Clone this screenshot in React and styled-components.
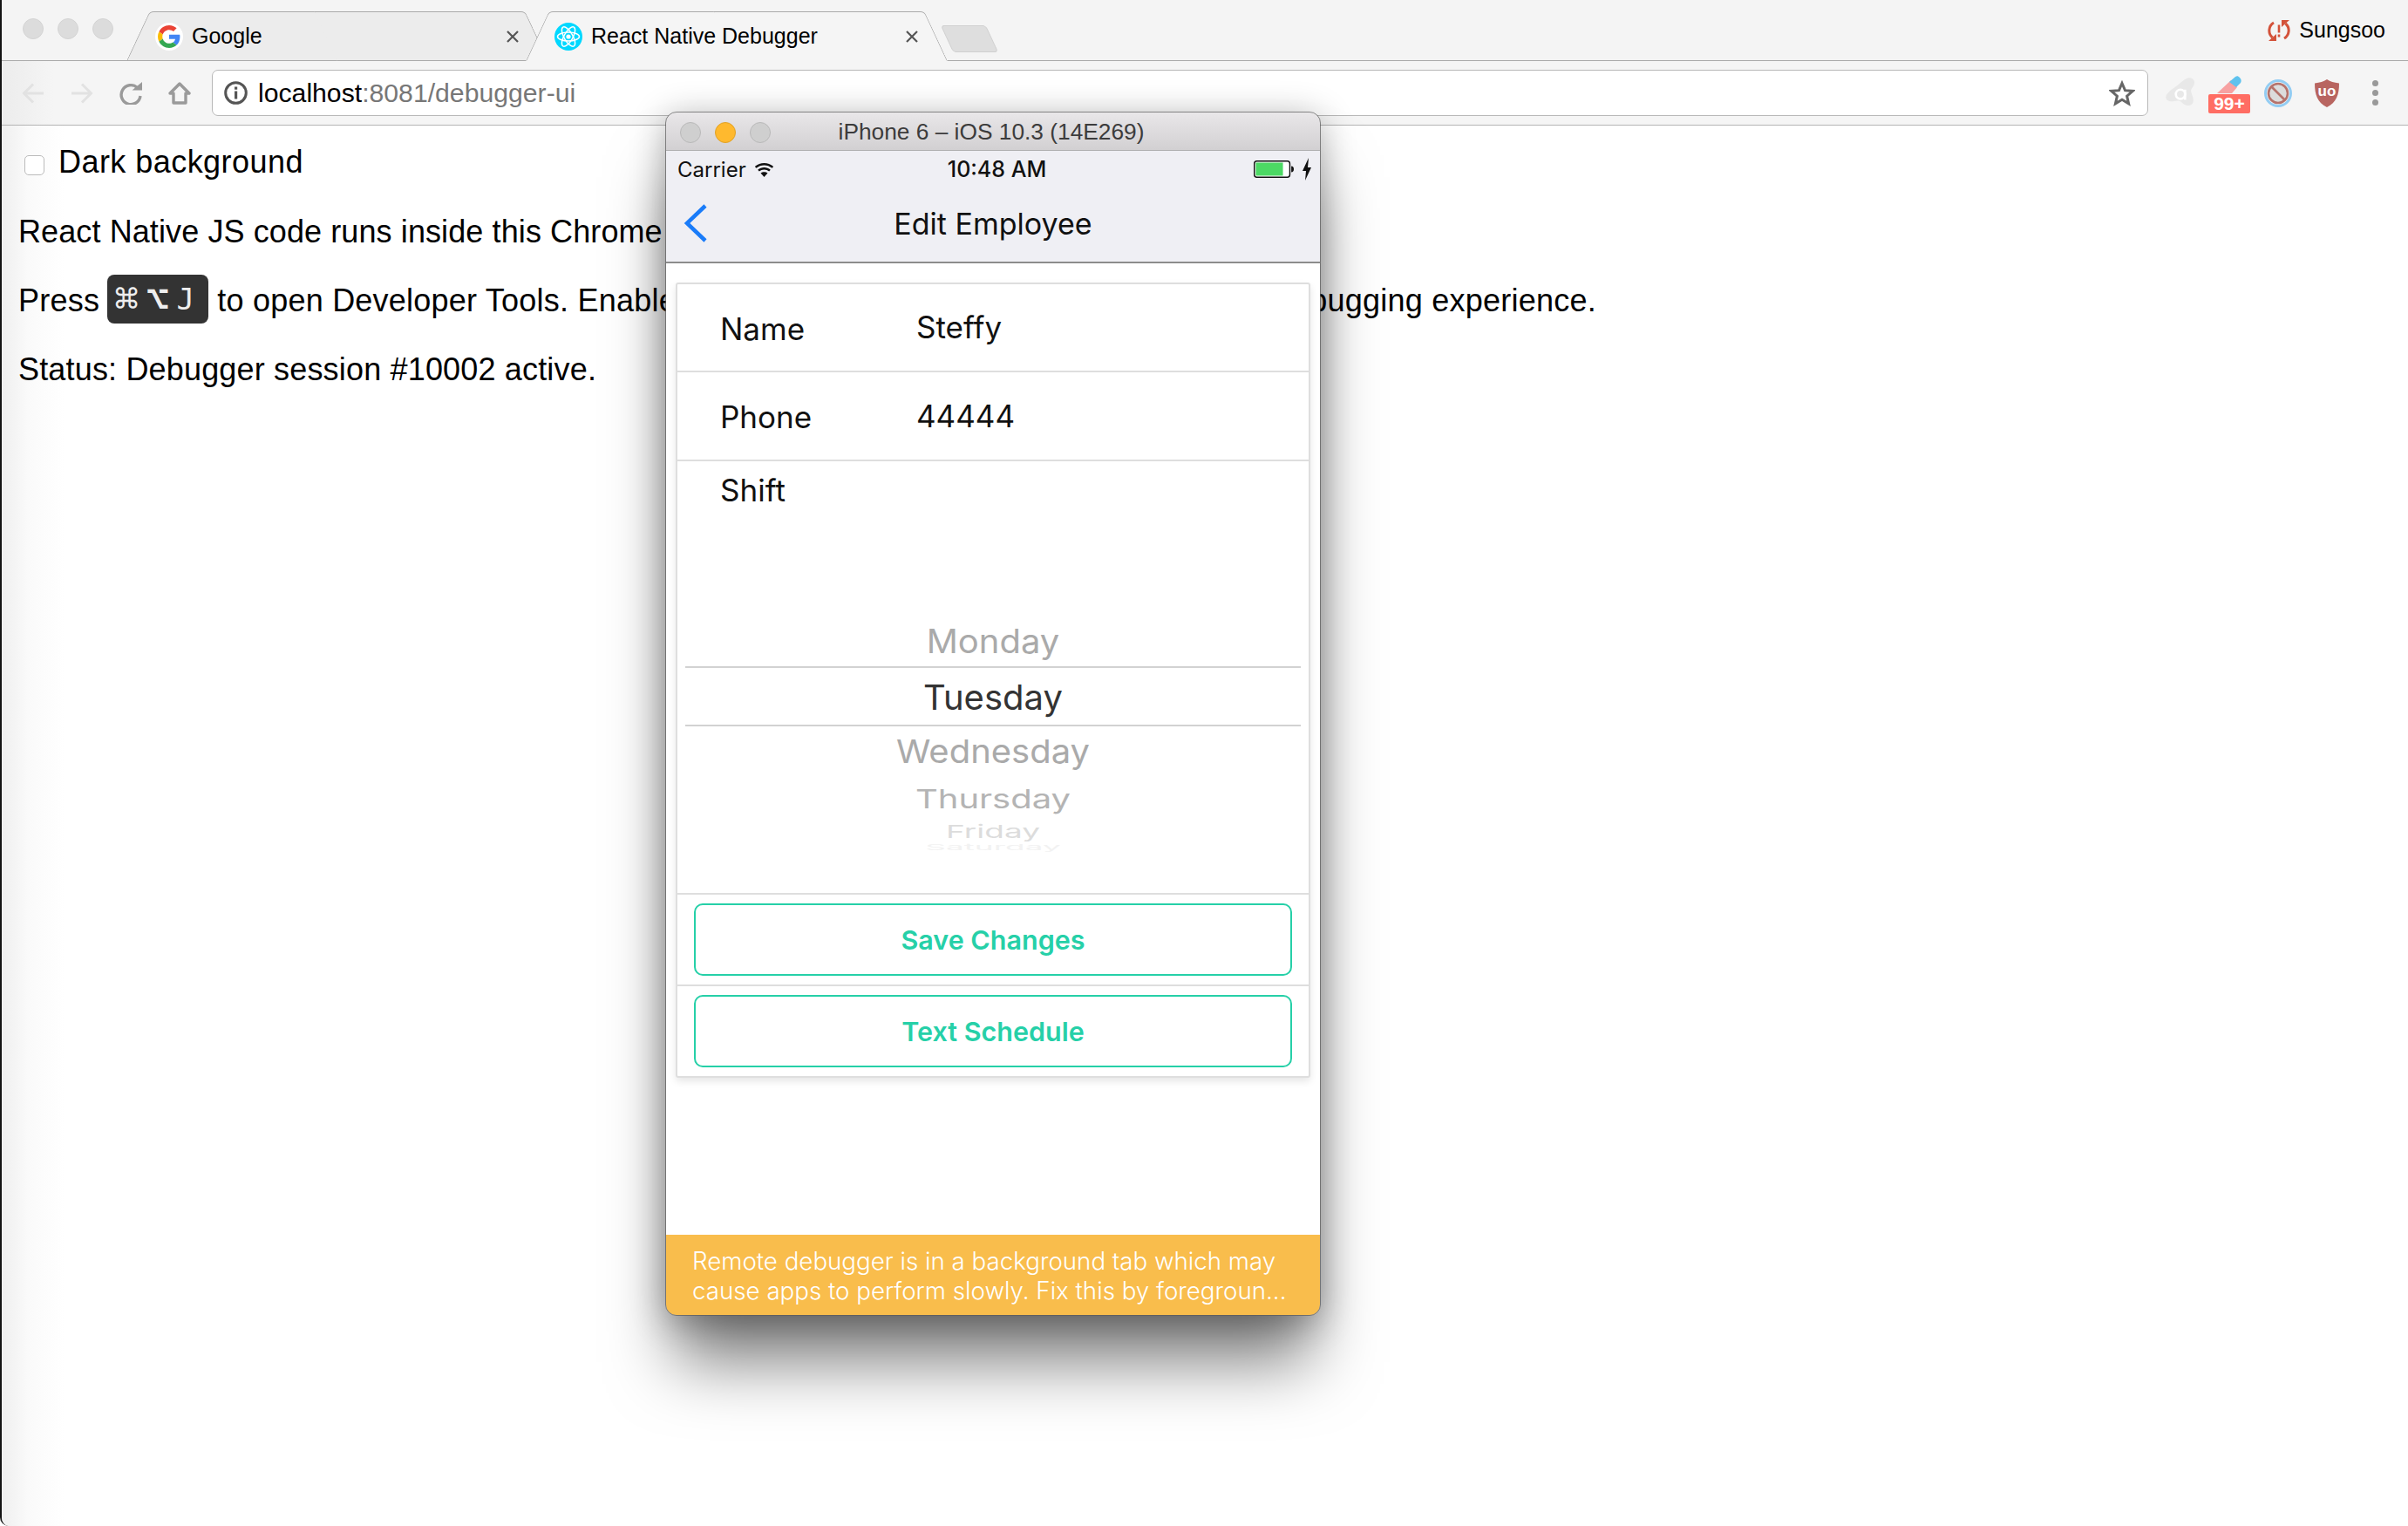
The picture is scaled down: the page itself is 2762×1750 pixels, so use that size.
import React from "react";
import styled, { createGlobalStyle } from "styled-components";

const Global = createGlobalStyle`
  html, body { margin: 0; padding: 0; background: #fff; }
  * { box-sizing: border-box; }
`;

const SANS = `"Liberation Sans", Arial, sans-serif`;
const IOS = `Inter, "Liberation Sans", sans-serif`;

const Screen = styled.div`
  position: relative;
  width: 2762px;
  height: 1750px;
  overflow: hidden;
  display: flex;
  flex-direction: column;
  font-family: ${SANS};
  border-left: 2px solid #141414;
  border-bottom-left-radius: 10px;
`;

/* ---- chrome tab strip ---- */
const TabStrip = styled.div`
  height: 70px;
  flex: none;
  display: flex;
  align-items: flex-end;
  background: #f4f4f4;
  border-bottom: 1px solid #aaa;
  padding-left: 24px;
  padding-right: 26px;
`;

const Lights = styled.div`
  display: flex;
  gap: 16px;
  align-self: flex-start;
  margin-top: 21px;
  margin-right: 15px;
`;

const Light = styled.span`
  width: 24px;
  height: 24px;
  border-radius: 50%;
  background: #dcdcdc;
  border: 1px solid #d4d4d4;
`;

const Tab = styled.div`
  position: relative;
  isolation: isolate;
  width: 483px;
  height: 57px;
  margin-bottom: -1px;
  margin-left: ${(p) => (p.$active ? "-25px" : "0")};
  z-index: ${(p) => (p.$active ? 2 : 1)};
  display: flex;
  align-items: center;
  padding: 0 32px 0 33px;
  font-size: 25px;
  color: #000;

  &::before,
  &::after {
    content: "";
    position: absolute;
    top: 0;
    bottom: 0;
    z-index: -1;
    background: ${(p) => (p.$active ? "#f5f5f5" : "#ececec")};
    border-top: 1px solid #aaa;
    border-bottom: 1px solid ${(p) => (p.$active ? "#f5f5f5" : "#aaa")};
  }
  &::before {
    left: 0;
    right: 50%;
    transform-origin: bottom left;
    transform: skewX(-25deg);
    border-left: 1px solid #aaa;
    border-top-left-radius: 5px;
  }
  &::after {
    left: 50%;
    right: 0;
    transform-origin: bottom right;
    transform: skewX(25deg);
    border-right: 1px solid #aaa;
    border-top-right-radius: 5px;
  }
`;

const Favicon = styled.span`
  width: 32px;
  height: 32px;
  flex: none;
  border-radius: 50%;
  background: ${(p) => (p.$cyan ? "#00d8ff" : "#fff")};
  display: flex;
  align-items: center;
  justify-content: center;
  margin-right: 10px;
`;

const TabTitle = styled.span`
  flex: 1;
  white-space: nowrap;
`;

const NewTab = styled.div`
  width: 52px;
  height: 31px;
  margin-bottom: 9px;
  margin-left: 0;
  background: #dedede;
  border: 1px solid #d0d0d0;
  border-radius: 4px;
  transform: skewX(25deg);
`;

const Profile = styled.div`
  margin-left: auto;
  align-self: center;
  display: flex;
  align-items: center;
  gap: 10px;
  font-size: 25px;
  color: #000;
`;

/* ---- chrome toolbar ---- */
const Toolbar = styled.div`
  height: 74px;
  flex: none;
  display: flex;
  align-items: center;
  background: linear-gradient(90deg, #ececec 0, #f5f5f5 60px);
  border-bottom: 1px solid #b4b4b4;
  padding-left: 23px;
`;

const NavButton = styled.span`
  width: 26px;
  height: 26px;
  margin-right: 30px;
  display: flex;
  flex: none;
`;

const Address = styled.div`
  width: 2221px;
  height: 53px;
  margin-left: -6px;
  flex: none;
  display: flex;
  align-items: center;
  background: #fff;
  border: 1px solid #b8b8b8;
  border-radius: 7px;
  padding: 0 14px 0 13px;
`;

const Url = styled.span`
  flex: 1;
  margin-left: 12px;
  font-size: 30.2px;
  color: #000;

  span {
    color: #777;
  }
`;

const Extensions = styled.div`
  display: flex;
  align-items: center;
  flex: none;
  height: 100%;
`;

const Ext = styled.span`
  position: relative;
  display: flex;
  justify-content: center;
  align-items: center;
  flex: none;
  width: ${(p) => p.$w}px;
`;

const Badge = styled.span`
  position: absolute;
  top: 3px;
  left: -5px;
  width: 48px;
  height: 22px;
  background: #ff6d63;
  border-radius: 2px;
  color: #fff;
  font-size: 21px;
  font-weight: 700;
  line-height: 22px;
  text-align: center;
`;

const MenuDots = styled.span`
  display: flex;
  flex-direction: column;
  gap: 4px;
  margin-left: 33px;

  i {
    width: 7px;
    height: 7px;
    border-radius: 50%;
    background: #999;
  }
`;

/* ---- debugger page ---- */
const Page = styled.main`
  flex: 1;
  padding: 3px 0 0 19px;
  background: linear-gradient(90deg, #efefef 0, #fafafa 30px, #fff 72px);
  font-size: 36px;
  color: #000;
`;

const Line = styled.p`
  margin: 0;
  height: 79px;
  line-height: 79px;
  white-space: nowrap;
  letter-spacing: ${(p) => p.$spacing}px;
`;

const DarkLabel = styled.label`
  display: flex;
  align-items: center;
  height: 79px;
  margin-left: 7px;
  padding-bottom: 2px;
  gap: 16px;
  letter-spacing: 0.45px;
`;

const Check = styled.input`
  appearance: none;
  width: 23px;
  height: 23px;
  margin: 8px 0 0;
  background: #fff;
  border: 1px solid #bbb;
  border-radius: 5px;
`;

const Kbd = styled.kbd`
  display: inline-flex;
  align-items: center;
  gap: 8px;
  vertical-align: middle;
  height: 56px;
  width: 116px;
  margin: -9px 10px 0 9px;
  padding-left: 8px;
  background: #333;
  border-radius: 8px;
  color: #eee;
  font-family: "DejaVu Sans Mono", monospace;
  letter-spacing: 0;
`;

const KeyGlyph = styled.span`
  font-size: ${(p) => p.$size}px;
  line-height: 1;
`;

/* ---- simulator window ---- */
const Simulator = styled.section`
  position: absolute;
  left: 762px;
  top: 129px;
  width: 750px;
  height: 1379px;
  display: flex;
  flex-direction: column;
  background: #fff;
  border-radius: 12px;
  outline: 1px solid rgba(90, 90, 90, 0.7);
  box-shadow: 0 64px 76px -10px rgba(0, 0, 0, 0.5), 0 6px 40px rgba(0, 0, 0, 0.32);
  font-family: ${IOS};
  overflow: hidden;
`;

const SimTitle = styled.header`
  height: 44px;
  flex: none;
  display: grid;
  grid-template-columns: 1fr auto 1fr;
  align-items: center;
  padding: 2px 20px 0 16px;
  background: linear-gradient(#e9e7e9, #d2d0d2);
  border-bottom: 1px solid #b0b0b0;
  color: #3c3c3c;
  font-family: ${SANS};
  font-size: 26.3px;
`;

const SimLights = styled.div`
  display: flex;
  gap: 16px;
`;

const SimLight = styled.span`
  width: 24px;
  height: 24px;
  border-radius: 50%;
  background: ${(p) => (p.$on ? "#ffb92e" : "#cfcfcf")};
  border: 1px solid ${(p) => (p.$on ? "#e0a126" : "#b9b9b9")};
`;

const StatusBar = styled.div`
  height: 44px;
  flex: none;
  display: grid;
  grid-template-columns: 1fr auto 1fr;
  align-items: center;
  padding: 0 10px 2px 13px;
  background: #efeff4;
  font-size: 24px;
  color: #111;
`;

const Carrier = styled.span`
  display: flex;
  align-items: center;
  gap: 8px;
`;

const Clock = styled.span`
  font-weight: 500;
  font-size: 25px;
  margin-left: 6px;
`;

const Power = styled.span`
  display: flex;
  justify-content: flex-end;
  align-items: center;
  gap: 10px;
`;

const NavBar = styled.div`
  height: 85px;
  flex: none;
  display: grid;
  grid-template-columns: 1fr auto 1fr;
  align-items: center;
  padding: 0 20px 5px 20px;
  background: #efeff4;
  border-bottom: 2px solid #8c8c8c;
  font-size: 34px;
  color: #111;
`;

const Content = styled.div`
  flex: 1;
  padding: 22px 11px 0;
`;

const Card = styled.div`
  border: 2px solid #dedede;
  border-radius: 3px;
  box-shadow: 0 4px 8px rgba(0, 0, 0, 0.1);
  background: #fff;
`;

const Field = styled.div`
  height: ${(p) => p.$h}px;
  display: flex;
  align-items: center;
  padding-left: 49px;
  border-bottom: 2px solid #dedede;
  font-size: 35px;
  color: #111;
`;

const FieldLabel = styled.span`
  width: 225px;
  flex: none;
  padding-top: 2px;
`;

const FieldValue = styled.span`
  padding-bottom: 1px;
`;

const ShiftBlock = styled.div`
  height: 497px;
  overflow: hidden;
  border-bottom: 2px solid #dedede;
`;

const ShiftLabel = styled.div`
  height: 66px;
  line-height: 66px;
  padding-left: 49px;
  font-size: 35px;
  color: #111;
`;

const Picker = styled.div`
  margin: 112px 9px 0;
`;

const PickerItem = styled.div`
  height: ${(p) => p.$h}px;
  line-height: ${(p) => (p.$selected ? p.$h - 2 : p.$h)}px;
  overflow: hidden;
  text-align: center;
  white-space: nowrap;
  color: ${(p) => p.$color};
  font-size: ${(p) => p.$size}px;
  ${(p) => p.$selected && "border-top: 2px solid #d2d2d2; border-bottom: 2px solid #d2d2d2;"}

  span {
    display: inline-block;
    transform: scaleY(${(p) => p.$squash});
  }
`;

const ButtonRow = styled.div`
  padding: 10px 19px;
  border-bottom: ${(p) => (p.$last ? "none" : "2px solid #dedede")};
`;

const ActionButton = styled.div`
  height: 83px;
  display: flex;
  align-items: center;
  justify-content: center;
  border: 2.5px solid #26d0a8;
  border-radius: 10px;
  color: #26d0a8;
  font-size: 30.5px;
  font-weight: 600;
`;

const Warning = styled.footer`
  height: 92px;
  flex: none;
  padding: 13px 0 0 30px;
  background: #f9bd4c;
  color: #fff;
  font-size: 27.7px;
  font-weight: 300;
  line-height: 34px;
  white-space: nowrap;
`;

const GoogleIcon = () => (
  <svg width="26" height="26" viewBox="0 0 48 48">
    <path fill="#EA4335" d="M24 9.5c3.5 0 6.700 1.300 9.100 3.500l6.800-6.800C35.800 2.400 30.300 0 24 0 14.600 0 6.500 5.400 2.600 13.200l7.900 6.200C12.400 13.700 17.700 9.500 24 9.500z" />
    <path fill="#4285F4" d="M46.900 24.500c0-1.600-.1-3.100-.4-4.500H24v9h12.900c-.6 3-2.200 5.500-4.800 7.200l7.700 6c4.500-4.200 7.100-10.300 7.100-17.700z" />
    <path fill="#FBBC05" d="M10.500 28.600c-.5-1.400-.8-3-.8-4.600s.3-3.200.8-4.600l-7.900-6.200C.9 16.500 0 20.100 0 24s.9 7.500 2.600 10.800l7.900-6.200z" />
    <path fill="#34A853" d="M24 48c6.500 0 11.900-2.100 15.800-5.800l-7.700-6c-2.100 1.400-4.900 2.300-8.100 2.300-6.300 0-11.600-4.200-13.500-9.900l-7.900 6.200C6.500 42.600 14.600 48 24 48z" />
  </svg>
);

const AtomIcon = () => (
  <svg width="30" height="30" viewBox="0 0 30 30" fill="none" stroke="#fff" strokeWidth="1.500">
    <circle cx="15" cy="15" r="2.600" fill="#fff" stroke="none" />
    <ellipse cx="15" cy="15" rx="12.500" ry="5" />
    <ellipse cx="15" cy="15" rx="12.500" ry="5" transform="rotate(60 15 15)" />
    <ellipse cx="15" cy="15" rx="12.500" ry="5" transform="rotate(120 15 15)" />
  </svg>
);

const CloseIcon = () => (
  <svg width="16" height="16" viewBox="0 0 16 16" stroke="#555" strokeWidth="2.200" style={{ flex: "none" }}>
    <path d="M2 2l12 12M14 2L2 14" />
  </svg>
);

const SyncIcon = () => (
  <svg width="26" height="26" viewBox="0 0 26 26" fill="none" stroke="#d3523a" strokeWidth="3">
    <path d="M7 4A10.500 10.500 0 0 0 5.500 21" />
    <path d="M19 22A10.500 10.500 0 0 0 20.500 5" />
    <path d="M1 25h9v-8zM25 1h-9v8z" fill="#d3523a" stroke="none" />
    <path d="M13 6.500v9M13 17.500v3" strokeWidth="2.600" />
  </svg>
);

const Arrow = ({ flip }) => (
  <svg width="26" height="26" viewBox="0 0 26 26" fill="none" stroke="#e2e2e2" strokeWidth="3" transform={flip ? "scale(-1 1)" : undefined}>
    <path d="M25 13H3M13 2.500L2.500 13 13 23.500" />
  </svg>
);

const ReloadIcon = () => (
  <svg width="26" height="26" viewBox="0 0 26 26" fill="none" stroke="#9a9a9a" strokeWidth="3.400">
    <path d="M20.500 6.500A11 11 0 1 0 24 16" />
    <path d="M14.500 9.500H26V0z" fill="#9a9a9a" stroke="none" />
  </svg>
);

const HomeIcon = () => (
  <svg width="26" height="26" viewBox="0 0 26 26" fill="none" stroke="#9a9a9a" strokeWidth="3.400" strokeLinejoin="round">
    <path d="M13 2L24 13h-4v11H6V13H2z" />
  </svg>
);

const InfoIcon = () => (
  <svg width="27" height="27" viewBox="0 0 27 27" style={{ flex: "none" }}>
    <circle cx="13.500" cy="13.500" r="11.800" fill="none" stroke="#555" strokeWidth="3" />
    <rect x="12" y="6.500" width="3.200" height="3.200" fill="#555" />
    <rect x="12" y="11.500" width="3.200" height="9" fill="#555" />
  </svg>
);

const StarIcon = () => (
  <svg width="30" height="30" viewBox="0 0 30 30" fill="none" stroke="#666" strokeWidth="3" style={{ flex: "none" }}>
    <path d="M15 3.500l3.500 8.200 8.800.7-6.700 5.800 2 8.600L15 22.300l-7.600 4.500 2-8.600-6.700-5.800 8.800-.7z" />
  </svg>
);

const AvastIcon = () => (
  <svg width="36" height="36" viewBox="0 0 34 34">
    <path fill="#e8e8e8" d="M25 .5c4-1 8 2 7 6-.5 3-3 5-3.500 7-.5 3 2.500 7 2.500 11 0 5-5 7-9 5-3-1.500-4-4-7-4.500-3-.5-7 1.500-10 .5C1 24.500.5 21 2 18.500 5 14 9 12 13 9c4-3 8-7.500 12-8.500z" />
    <circle cx="17" cy="18" r="5" fill="none" stroke="#fff" strokeWidth="2.500" />
    <path d="M22 13v11" stroke="#fff" strokeWidth="2.500" />
  </svg>
);

const EraserIcon = () => (
  <svg width="28" height="22" viewBox="0 0 28 22" style={{ marginTop: "-18px" }}>
    <path fill="#f7a1a1" d="M0 20L16 5l7 8-6 7z" />
    <path fill="#5ec2ee" d="M14 7l7-6c2-1 3-1 5 1s2 4 1 6l-5 5z" />
  </svg>
);

const BlockIcon = () => (
  <svg width="32" height="32" viewBox="0 0 32 32" fill="none">
    <circle cx="16" cy="16" r="14.500" stroke="#93cdf3" strokeWidth="3" />
    <circle cx="16" cy="16" r="11" fill="#dcdcdc" stroke="#b5736c" strokeWidth="2.600" />
    <path d="M8.500 8.500l15 15" stroke="#b5736c" strokeWidth="2.600" />
  </svg>
);

const UblockIcon = () => (
  <svg width="28" height="32" viewBox="0 0 28 32">
    <path fill="#b86560" d="M14 0c4 2.500 8 3.800 14 4.500 0 13-3 22-14 27.500C3 26.500 0 17.500 0 4.500 6 3.800 10 2.500 14 0z" />
    <text x="14" y="19" textAnchor="middle" fill="#fff" fontFamily="Liberation Sans" fontWeight="700" fontSize="17">uo</text>
  </svg>
);

const WifiIcon = () => (
  <svg width="25" height="18" viewBox="0 0 25 18" fill="#111">
    <path d="M12.500 18L8.500 13.500c2.200-1.800 5.800-1.800 8 0z" />
    <path d="M6.800 11.500C10 8.700 15 8.700 18.200 11.500l1.600-1.800C15.600 6 9.400 6 5.200 9.700z" />
    <path d="M3.400 7.800C8.700 3.300 16.300 3.300 21.600 7.800l1.600-1.800C16.900.700 8.100.700 1.800 6z" />
  </svg>
);

const BatteryIcon = () => (
  <svg width="46" height="20" viewBox="0 0 48 20" preserveAspectRatio="none">
    <rect x="0.750" y="0.750" width="42.500" height="18.500" rx="3" fill="#fff" stroke="#111" strokeWidth="1.500" />
    <rect x="2.500" y="2.500" width="32.500" height="15" fill="#4cd964" />
    <path d="M45 6.500c2 0 3 1.500 3 3.500s-1 3.500-3 3.500z" fill="#111" />
  </svg>
);

const BoltIcon = () => (
  <svg width="10" height="26" viewBox="0 0 10 26" fill="#111">
    <path d="M7 0L0 15h4l-1 11 7-15H6z" />
  </svg>
);

const BackChevron = () => (
  <svg width="27" height="44" viewBox="0 0 27 44" fill="none" stroke="#1a7cf9" strokeWidth="4.500">
    <path d="M25 2L4 22l21 20" />
  </svg>
);

const days = [
  { name: "Monday", h: 57, size: 40, squash: 0.95, color: "#aaa" },
  { name: "Tuesday", h: 69, size: 40, squash: 1, color: "#333", selected: true },
  { name: "Wednesday", h: 58, size: 40, squash: 0.93, color: "#aaa" },
  { name: "Thursday", h: 50, size: 40, squash: 0.76, color: "#b4b4b4" },
  { name: "Friday", h: 26, size: 37, squash: 0.55, color: "#dcdcdc" },
  { name: "Saturday", h: 10, size: 37, squash: 0.25, color: "#f2f2f2" },
];

function App() {
  return (
    <Screen>
      <Global />
      <TabStrip>
        <Lights>
          <Light />
          <Light />
          <Light />
        </Lights>
        <Tab>
          <Favicon>
            <GoogleIcon />
          </Favicon>
          <TabTitle>Google</TabTitle>
          <CloseIcon />
        </Tab>
        <Tab $active>
          <Favicon $cyan>
            <AtomIcon />
          </Favicon>
          <TabTitle>React Native Debugger</TabTitle>
          <CloseIcon />
        </Tab>
        <NewTab />
        <Profile>
          <SyncIcon />
          Sungsoo
        </Profile>
      </TabStrip>

      <Toolbar>
        <NavButton>
          <Arrow />
        </NavButton>
        <NavButton>
          <Arrow flip />
        </NavButton>
        <NavButton>
          <ReloadIcon />
        </NavButton>
        <NavButton>
          <HomeIcon />
        </NavButton>
        <Address>
          <InfoIcon />
          <Url>
            localhost<span>:8081/debugger-ui</span>
          </Url>
          <StarIcon />
        </Address>
        <Extensions>
          <Ext $w={74}>
            <AvastIcon />
          </Ext>
          <Ext $w={38}>
            <EraserIcon />
            <Badge>99+</Badge>
          </Ext>
          <Ext $w={74}>
            <BlockIcon />
          </Ext>
          <Ext $w={38}>
            <UblockIcon />
          </Ext>
          <MenuDots>
            <i />
            <i />
            <i />
          </MenuDots>
        </Extensions>
      </Toolbar>

      <Page>
        <DarkLabel>
          <Check type="checkbox" />
          Dark background
        </DarkLabel>
        <Line $spacing={0.1}>React Native JS code runs inside this Chrome tab.</Line>
        <Line $spacing={0.23}>
          Press
          <Kbd>
            <KeyGlyph $size={46}>⌘</KeyGlyph>
            <KeyGlyph $size={46}>⌥</KeyGlyph>
            <KeyGlyph $size={34}>J</KeyGlyph>
          </Kbd>
          to open Developer Tools. Enable Pause On Caught Exceptions for a better debugging experience.
        </Line>
        <Line $spacing={0.17}>Status: Debugger session #10002 active.</Line>
      </Page>

      <Simulator>
        <SimTitle>
          <SimLights>
            <SimLight />
            <SimLight $on />
            <SimLight />
          </SimLights>
          <span>iPhone 6 – iOS 10.3 (14E269)</span>
          <span />
        </SimTitle>
        <StatusBar>
          <Carrier>
            Carrier
            <WifiIcon />
          </Carrier>
          <Clock>10:48 AM</Clock>
          <Power>
            <BatteryIcon />
            <BoltIcon />
          </Power>
        </StatusBar>
        <NavBar>
          <BackChevron />
          <span>Edit Employee</span>
          <span />
        </NavBar>
        <Content>
          <Card>
            <Field $h={101}>
              <FieldLabel>Name</FieldLabel>
              <FieldValue>Steffy</FieldValue>
            </Field>
            <Field $h={102}>
              <FieldLabel>Phone</FieldLabel>
              <FieldValue>44444</FieldValue>
            </Field>
            <ShiftBlock>
              <ShiftLabel>Shift</ShiftLabel>
              <Picker>
                {days.map((d) => (
                  <PickerItem key={d.name} $h={d.h} $size={d.size} $squash={d.squash} $color={d.color} $selected={d.selected}>
                    <span>{d.name}</span>
                  </PickerItem>
                ))}
              </Picker>
            </ShiftBlock>
            <ButtonRow>
              <ActionButton>Save Changes</ActionButton>
            </ButtonRow>
            <ButtonRow $last>
              <ActionButton>Text Schedule</ActionButton>
            </ButtonRow>
          </Card>
        </Content>
        <Warning>
          Remote debugger is in a background tab which may
          <br />
          cause apps to perform slowly. Fix this by foregroun...
        </Warning>
      </Simulator>
    </Screen>
  );
}

export default App;
